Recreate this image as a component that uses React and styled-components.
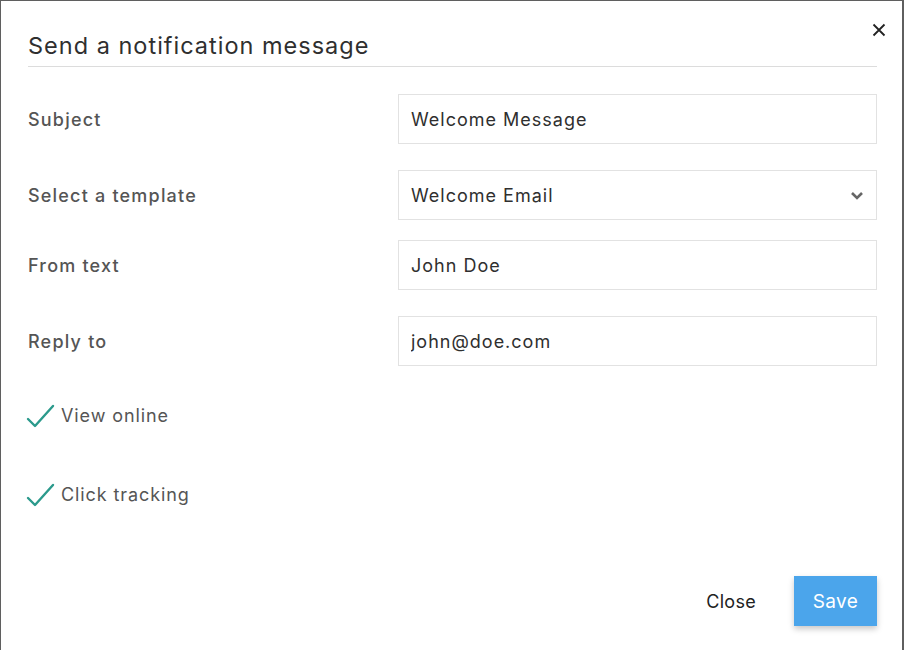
import React, { useState } from 'react';
import styled, { createGlobalStyle } from 'styled-components';

const GlobalStyle = createGlobalStyle`
  html, body {
    margin: 0;
    padding: 0;
    background: #5f5f5f;
    font-family: "Inter", "Lato", sans-serif;
  }
  * { box-sizing: border-box; }
`

const Backdrop = styled.div`
  width: 904px;
  height: 650px;
  padding: 1px 2px 0 1px;
  background: #5f5f5f;
`

const Modal = styled.div`
  position: relative;
  height: 100%;
  background: #fff;
  padding: 0 25px 0 27px;
  display: flex;
  flex-direction: column;
`

const Header = styled.div`
  padding-top: 31px;
  padding-bottom: 7px;
  border-bottom: 1.5px solid #dcdcdc;
`

const Title = styled.h1`
  margin: 0;
  font-size: 23.5px;
  font-weight: 400;
  color: #2f2f2f;
  letter-spacing: 1px;
  line-height: 27px;
`

const CloseX = styled.button`
  position: absolute;
  top: 18px;
  right: 12px;
  width: 22px;
  height: 22px;
  border: none;
  background: none;
  padding: 0;
  cursor: pointer;
  display: flex;
  align-items: center;
  justify-content: center;
`

const Form = styled.div`
  display: flex;
  flex-direction: column;
  padding-top: 27px;
`

const Row = styled.div`
  display: grid;
  grid-template-columns: 370px 1fr;
  align-items: center;
  margin-bottom: ${p => p.$after}px;
`

const Label = styled.label`
  font-size: 18px;
  font-weight: 500;
  color: #555;
  letter-spacing: 1.2px;
`

const Field = styled.div`
  position: relative;
  height: 50px;
  border: 1.5px solid #e2e2e2;
  display: flex;
  align-items: center;
`

const Input = styled.input`
  width: 100%;
  height: 100%;
  border: none;
  outline: none;
  padding: 0 12px;
  font-family: inherit;
  font-size: 18px;
  letter-spacing: 1px;
  color: #2f2f2f;
  background: transparent;
`

const SelectText = styled.div`
  flex: 1;
  padding: 0 12px;
  font-size: 18px;
  letter-spacing: 1px;
  color: #2f2f2f;
`

const Chevron = styled.svg`
  margin-right: 12px;
`

const Checks = styled.div`
  display: flex;
  flex-direction: column;
  gap: 49px;
  margin-top: 34px;
`

const CheckRow = styled.div`
  display: flex;
  align-items: center;
  gap: 5px;
  height: 30px;
  margin-left: -2px;
  font-size: 18px;
  letter-spacing: 0.9px;
  color: #555;
`

const Footer = styled.div`
  margin-top: auto;
  margin-bottom: 24px;
  display: flex;
  justify-content: flex-end;
  align-items: center;
  gap: 38px;
`

const TextButton = styled.button`
  border: none;
  background: none;
  font-family: inherit;
  font-size: 18px;
  letter-spacing: 0.3px;
  color: #222;
  cursor: pointer;
  padding: 0;
`

const PrimaryButton = styled.button`
  width: 83px;
  height: 50px;
  border: none;
  background: #4ba5eb;
  color: #fff;
  font-family: inherit;
  font-size: 19px;
  letter-spacing: 0.4px;
  cursor: pointer;
  box-shadow: 0 3px 6px rgba(0, 0, 0, 0.22);
`

const Check = () => (
  <svg width="30" height="26" viewBox="0 0 30 26">
    <path d="M2 17 L9 24 L27 4" fill="none" stroke="#2b9a8c" strokeWidth="2.4" strokeLinecap="round" strokeLinejoin="round" />
  </svg>
)

export default function App() {
  const [subject, setSubject] = useState('Welcome Message')
  const [from, setFrom] = useState('John Doe')
  const [reply, setReply] = useState('john@doe.com')

  return (
    <>
      <GlobalStyle />
      <Backdrop>
        <Modal>
          <CloseX aria-label="close">
            <svg width="14" height="14" viewBox="0 0 14 14">
              <path d="M1.5 1.5 L12.5 12.5 M12.5 1.5 L1.5 12.5" stroke="#222" strokeWidth="1.8" />
            </svg>
          </CloseX>
          <Header>
            <Title>Send a notification message</Title>
          </Header>
          <Form>
            <Row $after={26}>
              <Label>Subject</Label>
              <Field><Input value={subject} onChange={e => setSubject(e.target.value)} /></Field>
            </Row>
            <Row $after={20}>
              <Label>Select a template</Label>
              <Field>
                <SelectText>Welcome Email</SelectText>
                <Chevron width="14" height="9" viewBox="0 0 14 9">
                  <path d="M2 2 L7 7 L12 2" fill="none" stroke="#666" strokeWidth="2.6" />
                </Chevron>
              </Field>
            </Row>
            <Row $after={26}>
              <Label>From text</Label>
              <Field><Input value={from} onChange={e => setFrom(e.target.value)} /></Field>
            </Row>
            <Row $after={0}>
              <Label>Reply to</Label>
              <Field><Input value={reply} onChange={e => setReply(e.target.value)} /></Field>
            </Row>
          </Form>
          <Checks>
            <CheckRow><Check />View online</CheckRow>
            <CheckRow><Check />Click tracking</CheckRow>
          </Checks>
          <Footer>
            <TextButton>Close</TextButton>
            <PrimaryButton>Save</PrimaryButton>
          </Footer>
        </Modal>
      </Backdrop>
    </>
  )
}
